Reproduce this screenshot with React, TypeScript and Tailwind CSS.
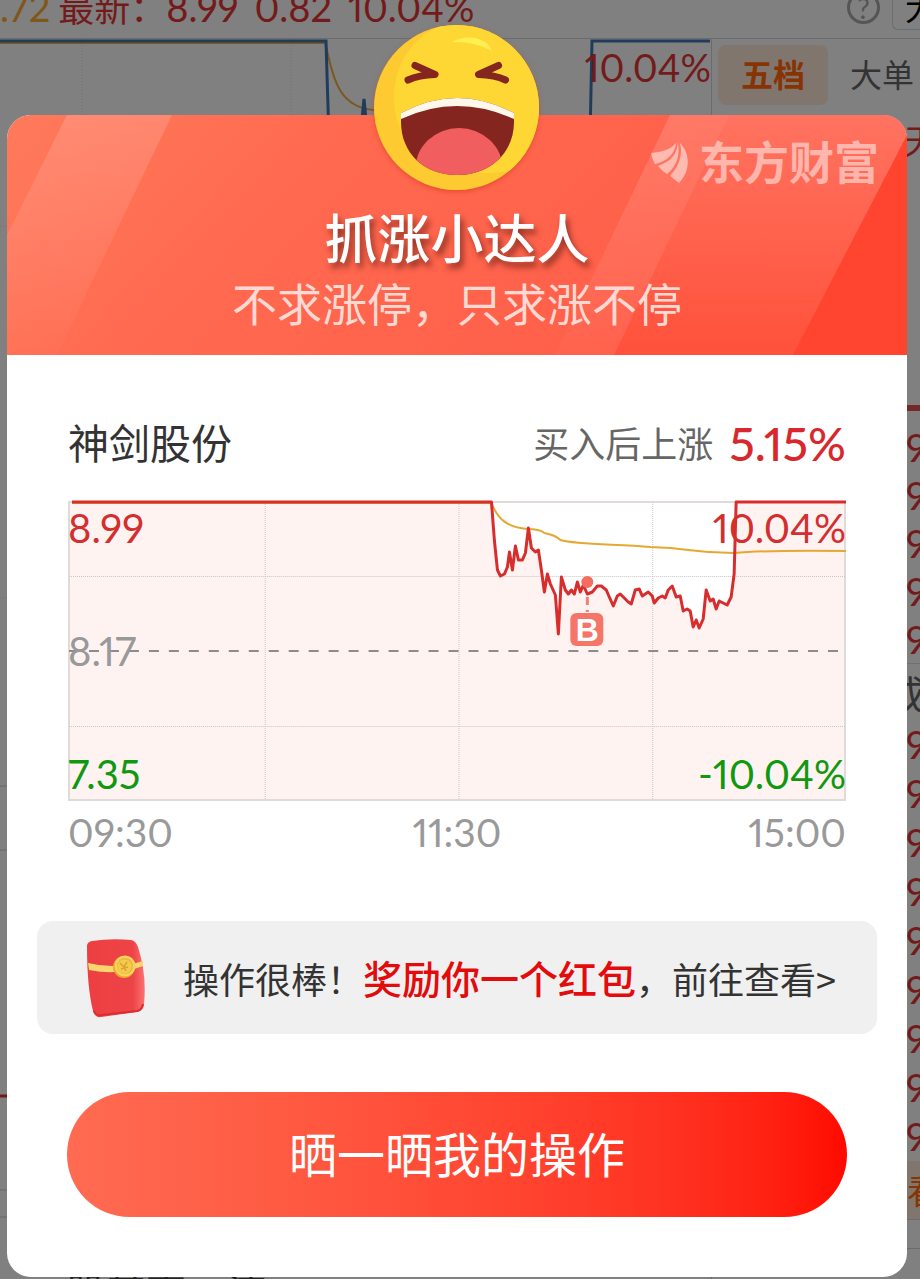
import React from 'react';

const sans = "font-['Noto_Sans_CJK_SC',sans-serif]";
const num = "font-['Lato','Noto_Sans_CJK_SC',sans-serif] proportional-nums";

function Emoji() {
  return (
    <svg viewBox="0 0 200 200" className="h-[200px] w-[200px]" aria-label="大笑" role="img">
      <defs>
        <clipPath id="face"><circle cx="97.500" cy="97.500" r="82.500" /></clipPath>
        <clipPath id="mouth"><path d="M42 103Q98 73 155 103V112C155 143 131 165 98 165S42 143 42 112Z" /></clipPath>
        <filter id="glow" x="-20%" y="-20%" width="140%" height="140%">
          <feDropShadow dx="0" dy="2" stdDeviation="2.500" floodColor="#d33b1c" floodOpacity=".6" />
        </filter>
      </defs>
      <circle cx="97.500" cy="97.500" r="82.500" fill="#fdca30" filter="url(#glow)" />
      <g clipPath="url(#face)">
        <path d="M90 12C54 25 35 52 35 90C37 134 68 168 122 163C142 163 152 161 165 156L190 130V10Z" fill="#ffd734" />
      </g>
      <path d="M93 32Q104 26 117 28Q129 31 133 41Q115 31 93 32Z" fill="#ffef51" />
      <g fill="none" stroke="#85251f" strokeWidth="7" strokeLinecap="round" strokeLinejoin="round">
        <path d="M56 55.500L76 64.500Q60 65 49 70" />
        <path d="M139.500 55.500L119.500 64.500Q136 65 146.500 70" />
      </g>
      <g clipPath="url(#mouth)">
        <rect x="35" y="70" width="130" height="100" fill="#85251f" />
        <ellipse cx="100" cy="160" rx="44" ry="42" fill="#f15e5f" />
        <path d="M42 109Q98 83 155 109V80H42Z" fill="#fff8ea" />
      </g>
    </svg>
  );
}

function Logo() {
  return (
    <div className="flex items-center gap-[10px] text-white/50">
      <svg viewBox="0 0 38 42" className="h-[42px] w-[38px]" fill="currentColor" aria-hidden="true">
        <path d="M25 1C19 8 11 10 0 11Q1 17 4 22C16 19 24 12 25 1Z" />
        <path d="M27 0C26 13 20 19 7 24Q11 29 16 32C26 24 29 14 27 0Z" />
        <path d="M29 1C32 13 28 24 19 34L28 41C39 30 40 12 29 1Z" />
      </svg>
      <span className="mb-1 text-[45px] leading-[48px] font-bold">东方财富</span>
    </div>
  );
}

function HeaderRays() {
  return (
    <svg viewBox="0 0 900 240" preserveAspectRatio="none" className="absolute inset-0 h-full w-full" aria-hidden="true">
      <defs>
        <linearGradient id="head" x1="0" y1="0" x2="1" y2=".25">
          <stop offset="0" stopColor="#ff7a5c" />
          <stop offset=".35" stopColor="#ff6a50" />
          <stop offset="1" stopColor="#ff5c48" />
        </linearGradient>
        <linearGradient id="ray" x1="0" y1="0" x2="0" y2="1">
          <stop offset="0" stopColor="#fff" stopOpacity=".15" />
          <stop offset="1" stopColor="#fff" stopOpacity=".02" />
        </linearGradient>
        <linearGradient id="shade" x1="0" y1="0" x2="0" y2="1">
          <stop offset="0" stopColor="#ff7360" />
          <stop offset="1" stopColor="#ff513b" />
        </linearGradient>
      </defs>
      <rect width="900" height="240" fill="url(#head)" />
      <path d="M60 0H165L50 240H0V120Z" fill="url(#ray)" />
      <path d="M722 0H900V30L787 240H607Z" fill="url(#shade)" />
      <path d="M663 0H722L607 240H548Z" fill="url(#ray)" />
      <path d="M900 20V240H786Z" fill="#ff452f" />
    </svg>
  );
}

const price =
  '4,2 424,2 427,41 430,70 433,76 437,74 440,67 442,52 445,70 448,46 451,60 455,60 458,53 461,28 464,48 468,52 471,50 474,70 477,92 480,74 483,84 488,95 491,134 494,77 498,90 501,94 504,90 507,94 510,82 513,92 516,85 520,94 525,92 530,86 534,86 539,90 542,97 546,106 550,96 553,94 557,98 561,102 564,104 568,90 572,89 575,96 581,92 585,96 587,103 591,98 595,96 598,98 601,90 605,86 609,97 613,96 616,111 620,109 623,111 626,127 629,120 632,128 636,119 639,90 643,101 646,99 649,109 652,101 656,103 660,105 664,97 667,74 669,2 779,2';

function StockChart() {
  return (
    <figure className="relative" aria-label="神剑股份分时走势">
      <svg viewBox="0 0 779 302" preserveAspectRatio="none" className="block h-[302px] w-full" aria-hidden="true">
        <path d={'M1 300V2L' + price.replace(/ /g, 'L') + 'V300Z'} fill="#fff3f2" />
        <rect x="1" y="2" width="777" height="298" fill="none" stroke="#e0dada" strokeWidth="2" />
        <path d="M1 76.500H778M1 226.500H778M197.500 2V300M391.500 2V300M585.500 2V300" stroke="#ccc4c4" strokeDasharray="1 1" fill="none" />
        <path d="M1 151H778" stroke="#918a8a" strokeWidth="2" strokeDasharray="10 10" />
        <path d="M4 3H424C430 18 438 27 460 29Q472 29 477 33Q488 35 493 40C510 45 550 44 583 47C625 48 625 53 667 53Q700 50 779 51" fill="none" stroke="#e5a832" strokeWidth="2" />
        <polyline points={price} fill="none" stroke="#d82d2d" strokeWidth="3" strokeLinejoin="round" />
        <circle cx="520" cy="82" r="6" fill="#f46d60" />
        <path d="M520 97V112" stroke="#ec8177" strokeWidth="3" strokeDasharray="8 5" />
        <rect x="503" y="113" width="33" height="33" rx="6" fill="#f67569" />
        <text x="520" y="141" textAnchor="middle" fill="#fff" className="font-['Liberation_Sans',sans-serif] text-[32px] font-bold">B</text>
      </svg>
      <div className={`absolute inset-0 flex flex-col justify-between py-[4px] text-[40px] leading-[48px] ${num}`}>
        <div className="flex justify-between text-[#d32f2f]"><span>8.99</span><span>10.04%</span></div>
        <div className="text-[#999]">8.17</div>
        <div className="flex justify-between text-[#109810]"><span>7.35</span><span>-10.04%</span></div>
      </div>
    </figure>
  );
}

function Envelope() {
  return (
    <svg viewBox="0 0 60 82" className="h-[82px] w-[60px] shrink-0" aria-hidden="true">
      <defs>
        <linearGradient id="env" x1="0" x2="1"><stop stopColor="#ed3f42" /><stop offset=".8" stopColor="#ee4447" /><stop offset="1" stopColor="#fb7472" /></linearGradient>
      </defs>
      <path d="M6 4Q25 1 45 3Q50 4 52 10Q61 38 58 67Q58 73 51 75L15 80Q9 81 7 74Q1 50 1 9Q1 5 6 4Z" fill="url(#env)" />
      <path d="M8 74Q10 79 15 78L51 74Q56 73 57 67" fill="none" stroke="#dc2d34" strokeWidth="2" />
      <path d="M2 26Q30 33 57 24V29Q32 39 3 33Z" fill="#f9d66e" />
      <circle cx="38" cy="30" r="11" fill="#eda92d" /><circle cx="39" cy="29" r="10.500" fill="#f8d35c" />
      <circle cx="39" cy="29" r="8" fill="#e9b73d" /><circle cx="38.500" cy="29.500" r="7" fill="#f4cb50" />
      <path d="M34 26L38 30L41 25M38 30L40 34M35 32L42 30" stroke="#dba32c" strokeWidth="1.500" fill="none" />
    </svg>
  );
}

const quotes = ['9', '9', '9', '9', '9'];
const trades = ['9', '9', '9', '9', '9', '9', '9', '9', '9'];

function Backdrop() {
  return (
    <div className="absolute inset-0 flex flex-col overflow-hidden bg-[#808080]" aria-hidden="true">
      <div className={`flex h-[39px] shrink-0 items-end justify-between border-b border-[#6b6b6e] text-[38px] leading-[48px] text-[#731b1b] ${num}`}>
        <div className="mb-[6px] flex gap-[8px] whitespace-nowrap">
          <span className="text-[#80571a]">.72</span>
          <div className="flex gap-[16px]">
            <span><span className="text-[36px]">最新：</span>8.99</span><span>0.82</span><span>10.04%</span>
          </div>
        </div>
        <div className="flex items-end gap-[12px]">
          <span className="mb-[14px] flex h-[33px] w-[33px] items-center justify-center rounded-full border-3 border-[#555] text-[28px] text-[#555]">?</span>
          <span className="mb-[8px] h-[40px] w-[28px] overflow-hidden rounded-bl-md border border-r-0 border-[#6b6e72] pl-3 text-[32px] leading-[34px] text-black">大</span>
        </div>
      </div>
      <div className="flex min-h-0 grow">
        <div className="relative min-w-0 grow border-r border-[#6b6b6e]">
          <svg viewBox="0 0 711 1240" preserveAspectRatio="none" className="h-[1240px] w-full">
            <path d="M82 0V1178M291 0V1178M0 187H7M0 559H7" stroke="#707072" strokeDasharray="1 2" />
            <path d="M0 4H325C332 27 333 68 374 71" stroke="#7b5721" strokeWidth="2" fill="none" />
            <path d="M0 2H326L329 100M361 90L364 60L367 90M590 100L592 2H710" stroke="#203c5c" strokeWidth="3" fill="none" />
            <path d="M0 747H7M0 811H7M0 1151H7M0 1178H711" stroke="#68686a" />
            <path d="M0 1057H7" stroke="#731b1b" strokeWidth="3" />
          </svg>
          <span className={`absolute top-[4px] right-0 text-[38px] leading-[48px] text-[#731b1b] ${num}`}>10.04%</span>
          <span className="absolute top-[1231px] left-[66px] text-[40px] leading-[40px] text-[#222]">股其高，济</span>
        </div>
        <div className="flex w-[208px] shrink-0 flex-col overflow-hidden whitespace-nowrap">
          <div className="flex shrink-0 items-center gap-[22px] pt-[6px] pl-[6px] text-[32px] leading-[60px]">
            <span className="h-[60px] rounded-lg bg-[#81766e] px-[23px] leading-[56px] font-bold text-[#873405]">五档</span>
            <span className="h-[60px] leading-[56px] text-[#333]">大单</span>
          </div>
          <div className="mt-[7px] h-[293px] shrink-0 pl-[192px] text-[34px] leading-[56px] text-[#731b1b]">天</div>
          <div className="h-[6px] shrink-0 bg-[#732929]" />
          <div className={`mt-[12px] shrink-0 pl-[194px] text-[38px] text-[#731b1b] ${num}`}>
            {quotes.map((q, i) => <div key={i} className="h-[48px] leading-[48px]">{q}</div>)}
          </div>
          <div className="shrink-0 border-t border-[#707070] pl-[176px] text-[38px] leading-[56px] text-[#333]">成</div>
          <div className={`shrink-0 pl-[194px] text-[38px] text-[#731b1b] ${num}`}>
            {trades.map((q, i) => <div key={i} className="h-[49px] leading-[49px]">{q}</div>)}
          </div>
          <div className="shrink-0 border-b border-[#6b6b6e] bg-[#81766e] pl-[195px] text-[34px] leading-[58px] text-[#873405]">看</div>
          <div className="h-[29px] shrink-0 border-b border-[#6b6b6e]" />
        </div>
      </div>
    </div>
  );
}

export default function App() {
  return (
    <main className={`relative min-h-screen overflow-hidden pt-[115px] pr-[13px] pb-[2px] pl-[7px] ${sans}`} lang="zh-CN">
      <Backdrop />
      <section role="dialog" aria-label="抓涨小达人" className="relative rounded-[24px] bg-white">
        <header className="relative flex h-[240px] flex-col items-center overflow-hidden rounded-t-[24px]">
          <HeaderRays />
          <div className="relative flex w-full justify-end pt-[22px] pr-[28px]"><Logo /></div>
          <h1 className="relative mt-[11px] text-[53px] leading-[72px] font-medium text-white [text-shadow:3px_5px_6px_#8b2f21]">抓涨小达人</h1>
          <p className="relative text-[45px] leading-[62px] text-[#ffd9d2]">不求涨停，只求涨不停</p>
        </header>
        <div className="absolute top-[-105px] left-1/2 -ml-[98px]"><Emoji /></div>
        <div className="px-[61px] pt-[54px]">
          <div className="flex items-center justify-between">
            <h2 className="text-[41px] leading-[60px] text-[#333]">神剑股份</h2>
            <p className="flex items-center gap-[16px] pt-[2px] text-[36px] leading-[60px] text-[#666]">
              买入后上涨<strong className={`pt-[2px] text-[47px] font-medium text-[#d8282d] ${num}`}>5.15%</strong>
            </p>
          </div>
          <div className="mt-[27px]"><StockChart /></div>
          <div className={`mt-[6px] grid grid-cols-3 text-[39px] leading-[48px] text-[#999] ${num}`}>
            <span>09:30</span><span className="text-center">11:30</span><span className="text-right">15:00</span>
          </div>
        </div>
        <a href="#reward" className="mx-[30px] mt-[65px] flex h-[113px] items-center rounded-[16px] bg-[#f0f0f0] pl-[49px] whitespace-nowrap text-[#333]">
          <Envelope />
          <span className="ml-[37px] text-[36px] leading-[52px]">操作很棒！<span className="text-[39px] font-medium text-[#e30b0b]">奖励你一个红包</span>，前往查看&gt;</span>
        </a>
        <div className="px-[60px] pt-[58px] pb-[60px]">
          <button type="button" className="h-[125px] w-full rounded-full bg-linear-to-r from-[#ff6b52] to-[#ff0800] pb-[6px] text-[48px] text-white">晒一晒我的操作</button>
        </div>
      </section>
    </main>
  );
}
